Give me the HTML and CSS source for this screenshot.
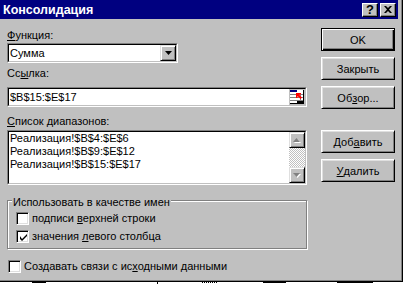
FILE: index.html
```html
<!DOCTYPE html>
<html lang="ru">

<head>
    <meta charset="UTF-8">
    <title>Консолидация</title>
    <link rel="stylesheet" href="styles.css">
</head>

<body>

    <div class="window">
        <!-- заголовок окна -->
        <div class="caption">
            <span class="caption-text">Консолидация</span>
            <div class="caption-btns">
                <span class="cap-btn">?</span>
                <span class="cap-btn">
                    <svg width="8" height="7" viewBox="0 0 8 7">
                        <path d="M0 0h2l2 2l2-2h2l-3 3.5l3 3.5h-2l-2-2l-2 2h-2l3-3.5z" fill="#000" />
                    </svg>
                </span>
            </div>
        </div>

        <div class="client">
            <div class="col-left">
                <div class="label lbl-func"><u>Ф</u>ункция:</div>
                <div class="combo sunken">
                    <div class="sunken-in">
                        <span class="combo-text">Сумма</span>
                        <span class="combo-btn">
                            <svg width="7" height="4" viewBox="0 0 7 4">
                                <path d="M0 0h7l-3.5 4z" fill="#000" />
                            </svg>
                        </span>
                    </div>
                </div>

                <div class="label lbl-ref">Сс<u>ы</u>лка:</div>
                <div class="field sunken">
                    <div class="sunken-in">
                        <span class="field-text">$B$15:$E$17</span>
                        <span class="refedit">
                            <svg width="16" height="16" viewBox="0 0 16 16">
                                <rect x="0" y="0" width="16" height="16" fill="#c0c0c0" />
                                <rect x="1" y="1" width="13" height="13" fill="#fff" />
                                <rect x="1" y="1" width="7" height="2" fill="#000080" />
                                <rect x="1" y="5" width="13" height="1" fill="#808080" />
                                <rect x="1" y="8" width="13" height="1" fill="#808080" />
                                <rect x="1" y="11" width="13" height="1" fill="#808080" />
                                <rect x="11" y="4" width="1" height="10" fill="#808080" />
                                <path d="M7 4h5v1.5h-2l3 3l-1.5 1.5l-3-3v2h-1.5z" fill="#ff0000" />
                                <rect x="8" y="12" width="6" height="2" fill="#000" />
                                <rect x="14" y="1" width="1" height="14" fill="#000" />
                                <rect x="1" y="14" width="14" height="1" fill="#000" />
                            </svg>
                        </span>
                    </div>
                </div>

                <div class="label lbl-list"><u>С</u>писок диапазонов:</div>
                <div class="listbox sunken">
                    <div class="sunken-in">
                        <div class="list-items">
                            <div>Реализация!$B$4:$E$6</div>
                            <div>Реализация!$B$9:$E$12</div>
                            <div>Реализация!$B$15:$E$17</div>
                        </div>
                        <div class="scrollbar">
                            <span class="sb-btn">
                                <svg width="8" height="5" viewBox="0 0 8 5">
                                    <path d="M1 5h7l-3.5-4z" fill="#fff" />
                                    <path d="M0 4h7l-3.5-4z" fill="#808080" />
                                </svg>
                            </span>
                            <span class="sb-track"></span>
                            <span class="sb-btn">
                                <svg width="8" height="5" viewBox="0 0 8 5">
                                    <path d="M1 1h7l-3.5 4z" fill="#fff" />
                                    <path d="M0 0h7l-3.5 4z" fill="#808080" />
                                </svg>
                            </span>
                        </div>
                    </div>
                </div>

                <!-- группа флажков -->
                <div class="group">
                    <span class="legend">Использовать в качестве имен</span>
                    <div class="check">
                        <span class="box"></span>
                        <span>подписи <u>в</u>ерхней строки</span>
                    </div>
                    <div class="check">
                        <span class="box">
                            <svg width="7" height="7" viewBox="0 0 7 7">
                                <path d="M0 2v3l2 2l5-5v-2l-5 5z" fill="#000" />
                            </svg>
                        </span>
                        <span>значения <u>л</u>евого столбца</span>
                    </div>
                </div>

                <div class="check links">
                    <span class="box"></span>
                    <span>Создавать связи с ис<u>х</u>одными данными</span>
                </div>
            </div>

            <!-- кнопки справа -->
            <div class="col-right">
                <div class="btn default">OK</div>
                <div class="btn">Закрыть</div>
                <div class="btn">Об<u>з</u>ор...</div>
                <div class="btn btn-add">Доб<u>а</u>вить</div>
                <div class="btn"><u>У</u>далить</div>
            </div>
        </div>
    </div>

    <!-- край листа под окном -->
    <div class="sheet">
        <span class="ink ink1"></span>
        <span class="ink ink2"></span>
        <span class="ink ink3"></span>
        <span class="ink ink4"></span>
        <span class="ink ink5"></span>
    </div>

</body>

</html>
```

FILE: styles.css
```css
* {
    box-sizing: border-box;
}

html,
body {
    margin: 0;
    padding: 0;
}

body {
    width: 404px;
    height: 284px;
    overflow: hidden;
    background: #fff;
    font-family: "Liberation Sans", Arial, sans-serif;
    font-size: 11px;
    color: #000;
}

u {
    text-underline-offset: 1px;
}

.window {
    width: 403px;
    height: 282px;
    background: #c0c0c0;
    border-right: 1px solid #000;
    border-bottom: 1px solid #000;
    box-shadow: inset -1px -1px #808080;
    padding-right: 4px;
}

/* заголовок */
.caption {
    height: 19px;
    background: #000080;
    display: flex;
    align-items: center;
    justify-content: space-between;
    padding: 0 2px 0 3px;
}

.caption-text {
    color: #fff;
    font-weight: bold;
    font-size: 12.5px;
}

.caption-btns {
    display: flex;
    gap: 2px;
}

.cap-btn {
    width: 16px;
    height: 14px;
    background: #c0c0c0;
    border: 1px solid;
    border-color: #fff #000 #000 #fff;
    box-shadow: inset -1px -1px #808080;
    display: flex;
    align-items: center;
    justify-content: center;
    font-weight: bold;
    font-size: 13px;
    line-height: 1;
}

.client {
    display: flex;
}

.col-left {
    width: 300px;
    margin-left: 7px;
}

.col-right {
    width: 74px;
    margin-left: 14px;
    padding-top: 9px;
    display: flex;
    flex-direction: column;
    gap: 6px;
}

.label {
    line-height: 13px;
}

.lbl-func {
    margin-top: 10px;
}

.lbl-ref {
    margin-top: 4px;
}

.lbl-list {
    margin-top: 8px;
}

/* утопленные поля */
.sunken {
    border: 1px solid;
    border-color: #808080 #fff #fff #808080;
}

.sunken-in {
    height: 100%;
    border: 1px solid;
    border-color: #000 #c0c0c0 #c0c0c0 #000;
    background: #fff;
    display: flex;
}

.combo {
    margin-top: 1px;
    width: 171px;
    height: 20px;
}

.combo-text,
.field-text {
    flex: 1;
    padding-left: 1px;
    line-height: 16px;
}

.combo-btn {
    width: 16px;
    height: 16px;
    background: #c0c0c0;
    border: 1px solid;
    border-color: #dfdfdf #000 #000 #dfdfdf;
    box-shadow: inset 1px 1px #fff, inset -1px -1px #808080;
    display: flex;
    align-items: center;
    justify-content: center;
}

.field {
    margin-top: 7px;
    width: 300px;
    height: 20px;
}

.refedit {
    width: 16px;
    height: 16px;
    display: flex;
}

.listbox {
    margin-top: 2px;
    width: 300px;
    height: 55px;
}

.list-items {
    flex: 1;
    padding-left: 1px;
    line-height: 13px;
}

.scrollbar {
    width: 16px;
    display: flex;
    flex-direction: column;
}

.sb-btn {
    height: 16px;
    background: #c0c0c0;
    border: 1px solid;
    border-color: #dfdfdf #000 #000 #dfdfdf;
    box-shadow: inset 1px 1px #fff, inset -1px -1px #808080;
    display: flex;
    align-items: center;
    justify-content: center;
}

.sb-track {
    flex: 1;
    background: conic-gradient(#c0c0c0 25%, #fff 0 50%, #c0c0c0 0 75%, #fff 0);
    background-size: 2px 2px;
}

/* группа */
.group {
    position: relative;
    margin-top: 15px;
    height: 49px;
    border: 1px solid #808080;
    box-shadow: inset 1px 1px #fff, 1px 1px #fff;
    padding: 11px 0 0 8px;
}

.legend {
    position: absolute;
    top: -5px;
    left: 4px;
    padding: 0 1px;
    background: #c0c0c0;
    line-height: 13px;
}

.check {
    display: flex;
    align-items: center;
    gap: 3px;
    height: 13px;
    line-height: 13px;
}

.check+.check {
    margin-top: 5px;
}

.box {
    width: 13px;
    height: 13px;
    border: 1px solid;
    border-color: #808080 #fff #fff #808080;
    box-shadow: inset 1px 1px #000, inset -1px -1px #dfdfdf;
    background: #fff;
    display: flex;
    align-items: center;
    justify-content: center;
    padding: 1px 0 0 1px;
}

.links {
    margin-top: 11px;
    margin-left: 1px;
}

/* кнопки */
.btn {
    height: 23px;
    background: #c0c0c0;
    border: 1px solid;
    border-color: #fff #000 #000 #fff;
    box-shadow: inset 1px 1px #dfdfdf, inset -1px -1px #808080;
    display: flex;
    align-items: center;
    justify-content: center;
}

.btn.default {
    border-color: #000;
    box-shadow: inset 1px 1px #fff, inset -1px -1px #000, inset -2px -2px #808080;
}

.btn-add {
    margin-top: 15px;
}

/* лист под окном */
.sheet {
    height: 2px;
    display: flex;
}

.ink {
    height: 1px;
    background: #000;
}

.ink1 {
    margin-left: 32px;
    width: 14px;
}

.ink2 {
    margin-left: 111px;
    width: 1px;
    height: 2px;
}

.ink3 {
    margin-left: 44px;
    width: 16px;
    background: repeating-linear-gradient(90deg, #000 0 1px, #fff 1px 2px);
}

.ink4 {
    margin-left: 45px;
    width: 23px;
}

.ink5 {
    margin-left: 51px;
    width: 36px;
}
```
